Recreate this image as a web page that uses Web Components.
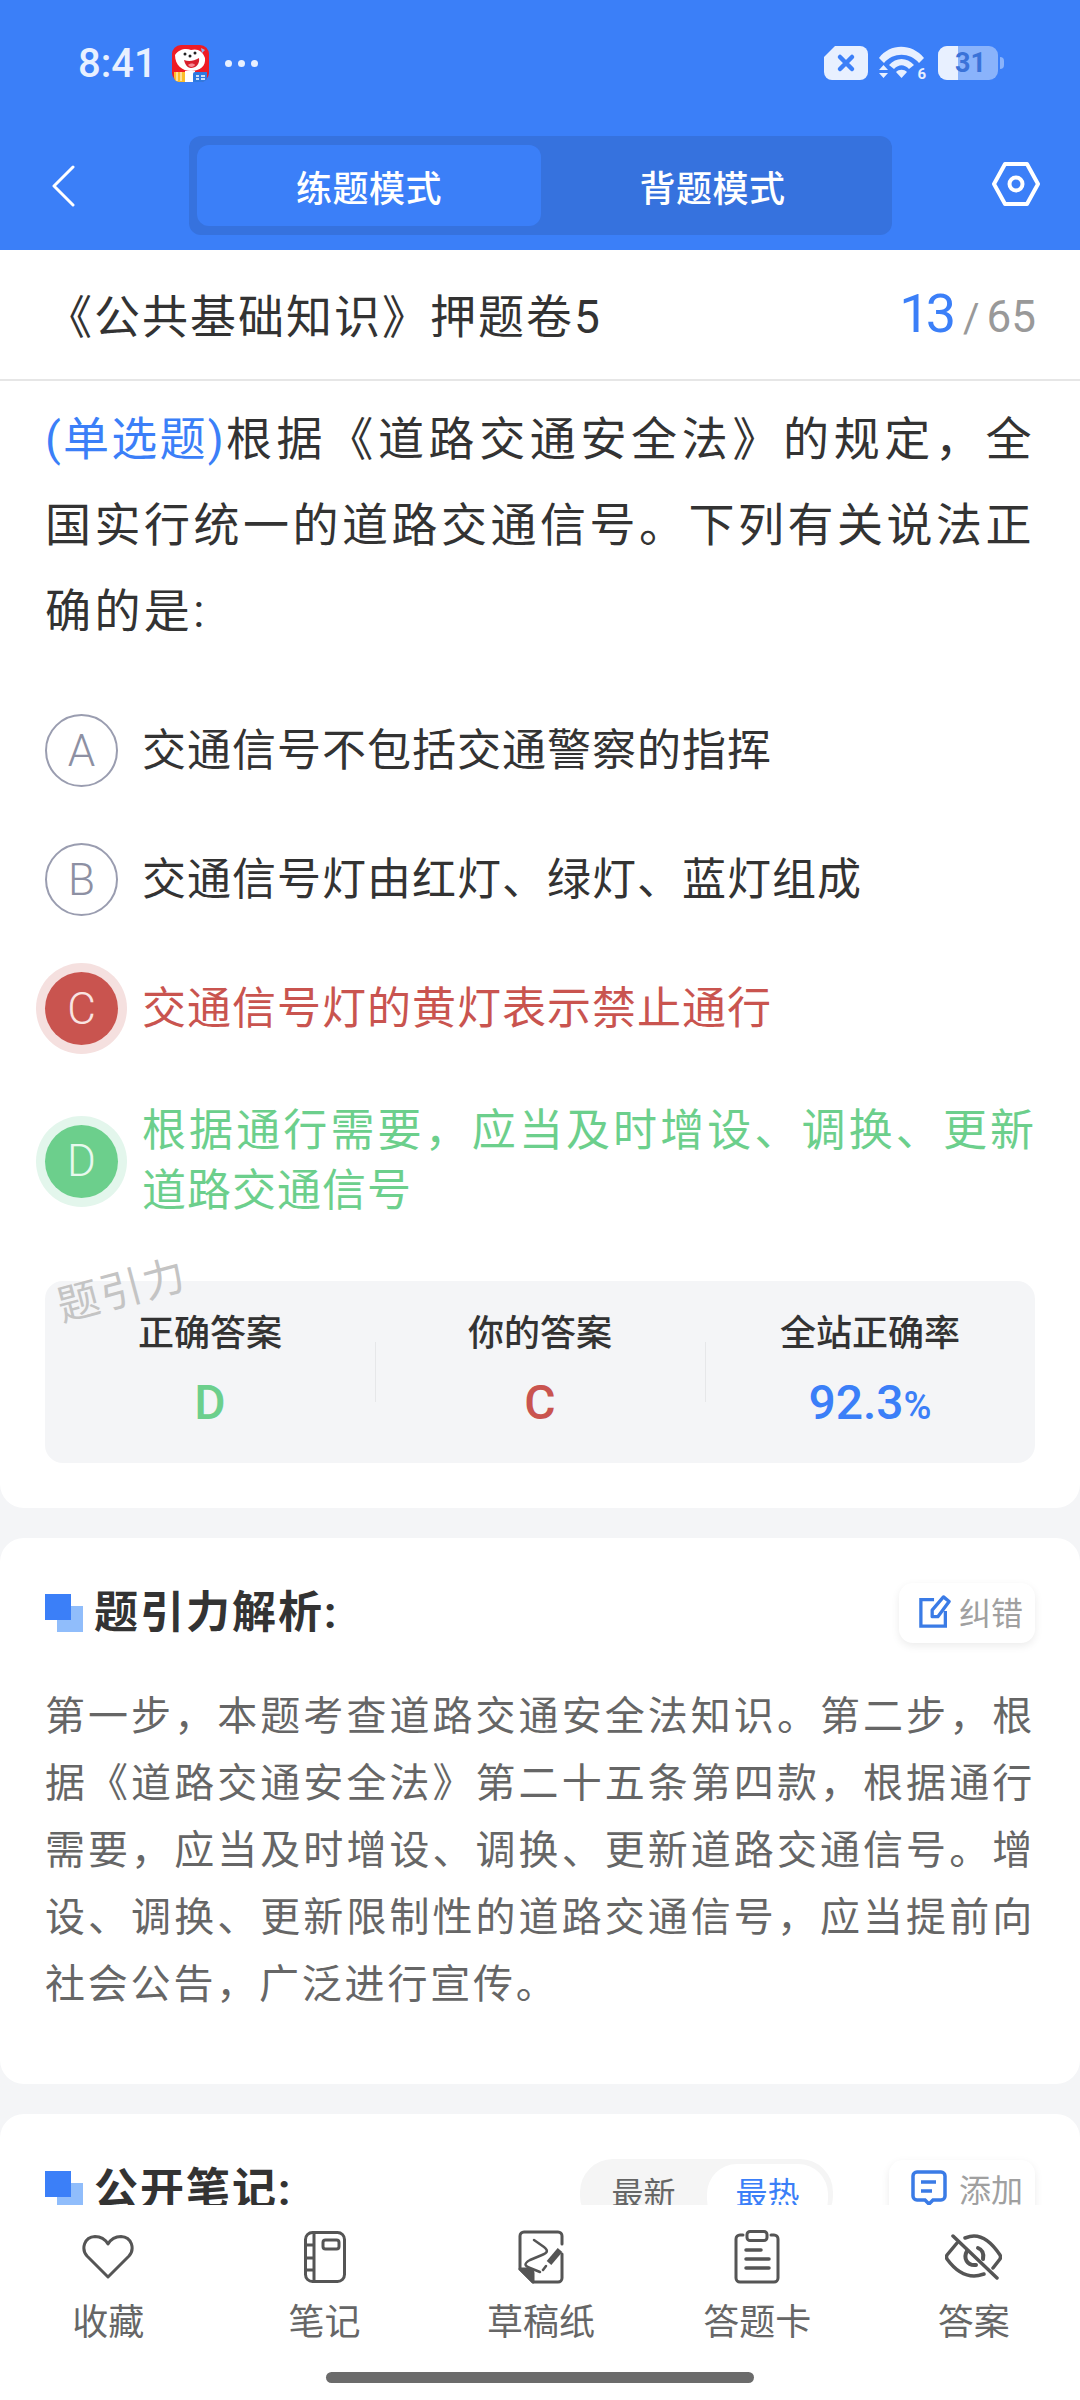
<!DOCTYPE html>
<html lang="zh">
<head>
<meta charset="utf-8">
<style>
   html, body { margin: 0; padding: 0; }
   body {
      position: relative;
      width: 1080px;
      height: 2400px;
      overflow: hidden;
      background: #f4f5f7;
      font-family: Roboto, "Noto Sans CJK SC", sans-serif;
      color: #333;
   }
</style>
</head>
<body>

<template id="app-header">
   <style>
      :host { display: block; height: 250px; background: #3b7ff8; color: #fff; }
      .status { height: 126px; display: flex; align-items: center; padding: 0 76px 0 78px; }
      .time { font-size: 40px; font-weight: 500; color: #e8f0ff; width: 94px; }
      .dots { display: flex; gap: 6px; margin-left: 16px; }
      .dots i { width: 7px; height: 7px; border-radius: 50%; background: #e8f0ff; }
      .right { margin-left: auto; display: flex; align-items: center; gap: 10px; }
      .wifi { position: relative; width: 48px; height: 36px; margin-right: 2px; }
      .wifi svg { display: block; }
      .wifi span { position: absolute; right: 0; bottom: 0; font-size: 15px; line-height: 14px; font-weight: 700; color: #e8f0ff; }
      .bat { position: relative; width: 66px; height: 34px; }
      .bat svg { display: block; }
      .bat span { position: absolute; left: 17px; top: 0; font-size: 27px; line-height: 34px; font-weight: 700; color: #3a72d8; }
      .nav { height: 124px; display: flex; align-items: flex-start; padding: 10px 40px 0 51px; }
      .back { margin-top: 29px; }
      .tabs {
         width: 703px; height: 99px; box-sizing: border-box; margin-left: 114px;
         padding: 9px 8px; background: #3672de; border-radius: 12px;
         display: flex; font-size: 36px; font-weight: 500;
      }
      .tabs div { flex: 1; display: flex; align-items: center; justify-content: center; letter-spacing: 0.5px; }
      .tabs .on { flex: none; width: 344px; background: #3b7ff8; border-radius: 12px; }
      .hex { margin: 26px 0 0 auto; }
   </style>
   <div class="status">
      <span class="time">8:41</span>
      <svg width="37" height="37" viewBox="0 0 37 37">
         <rect width="37" height="37" rx="9" fill="#ee1c25"/>
         <path d="M3 10C7 4 14 3 19 5C25 3 31 6 33 13C34 21 28 26 19 26C10 26 3 20 3 10Z" fill="#fff"/>
         <path d="M12 15C17 17 22 16 27 13C28 19 24 23 19 23C15 23 13 19 12 15Z" fill="#d81e2c"/>
         <path d="M16 20C18 18 22 18 23 20C22 22 18 23 16 20Z" fill="#f78a94"/>
         <circle cx="13" cy="9" r="1.500" fill="#222"/><circle cx="23" cy="8" r="1.500" fill="#222"/><circle cx="18" cy="11" r="1.500" fill="#222"/>
         <path d="M29 3L33 5L30 8Z" fill="#8fb8f0"/>
         <path d="M2 27H13V37H7a5 5 0 0 1-5-5Z" fill="#fbbd2b"/>
         <path d="M5 27V36M9 27V36" stroke="#fff" stroke-width="1"/>
         <rect x="13" y="26" width="10" height="11" fill="#fff"/>
         <path d="M21 29a2 2 0 0 1 2-2H35V32a5 5 0 0 1-5 5H21Z" fill="#2f79e0"/>
         <path d="M24 31H27M24 34H27M29 31H33M29 34H33" stroke="#fff" stroke-width="1.500"/>
      </svg>
      <span class="dots"><i></i><i></i><i></i></span>
      <div class="right">
         <svg width="44" height="34" viewBox="0 0 44 34">
            <path d="M11 0H36a8 8 0 0 1 8 8V26a8 8 0 0 1-8 8H8a8 8 0 0 1-8-8V11Z" fill="#e8f0ff"/>
            <path d="M16 11L28 23M28 11L16 23" stroke="#3b7ff8" stroke-width="4.500" stroke-linecap="round"/>
         </svg>
         <div class="wifi">
            <svg width="48" height="36" viewBox="0 0 48 36">
               <path d="M1 13C12 -2 34 -2 46 13L41 18C32 7 15 7 6 18Z" fill="#e8f0ff"/>
               <path d="M11 20C18 12 29 12 36 20L31 24C26 19 21 19 16 24Z" fill="#e8f0ff"/>
               <path d="M18 27C21 24 26 24 29 27L23.500 33Z" fill="#e8f0ff"/>
               <path d="M1 25L5.500 20L10 25ZM1 28L5.500 33L10 28Z" fill="#e8f0ff"/>
            </svg>
            <span>6</span>
         </div>
         <div class="bat">
            <svg width="66" height="34" viewBox="0 0 66 34">
               <rect width="60" height="34" rx="9" fill="#8ab3fb"/>
               <path d="M9 0H20V34H9a9 9 0 0 1-9-9V9a9 9 0 0 1 9-9Z" fill="#e8f0ff"/>
               <path d="M62 11a4 4 0 0 1 4 4v4a4 4 0 0 1-4 4Z" fill="#8ab3fb"/>
            </svg>
            <span>31</span>
         </div>
      </div>
   </div>
   <div class="nav">
      <svg class="back" width="24" height="42" viewBox="0 0 24 42" fill="none" stroke="#fff" stroke-width="3" stroke-linecap="round" stroke-linejoin="round"><path d="M22 2L3 21L22 40"/></svg>
      <div class="tabs"><div class="on">练题模式</div><div>背题模式</div></div>
      <svg class="hex" width="48" height="44" viewBox="0 0 48 44" fill="none" stroke="#fff" stroke-width="4" stroke-linejoin="round">
         <path d="M13 2H35L46 22L35 42H13L2 22Z"/><circle cx="24" cy="22" r="6.500"/>
      </svg>
   </div>
</template>

<template id="paper-title">
   <style>
      :host { display: flex; align-items: center; justify-content: space-between; height: 131px; box-sizing: border-box; padding: 0 44px 3px 46px; background: #fff; border-bottom: 2px solid #e6e6e6; }
      .name { font-size: 46px; color: #333; letter-spacing: 2px; }
      .count { display: flex; align-items: baseline; color: #999; font-size: 44px; }
      .count b { font-weight: 400; font-size: 54px; letter-spacing: -4px; color: #3b7ff8; }
      .count i { font-style: normal; font-size: 40px; margin: 0 7px 0 11px; }
   </style>
   <span class="name"><slot></slot></span>
   <span class="count"><b><slot name="current"></slot></b><i>/</i><slot name="total"></slot></span>
</template>

<template id="white-card">
   <style>
      :host { display: block; position: relative; background: #fff; border-radius: 24px; padding: 0 45px; }
   </style>
   <slot></slot>
</template>

<template id="answer-option">
   <style>
      :host { display: flex; align-items: center; gap: 24px; margin-top: var(--gap, 57px); font-size: 44px; letter-spacing: 1px; line-height: 60px; color: var(--tone, #333); }
      .dot {
         flex: none; width: 73px; height: 73px; box-sizing: border-box; border-radius: 50%;
         display: flex; align-items: center; justify-content: center;
         font-size: 44px; font-weight: 300; letter-spacing: 0; border: 2px solid #9a9db0; color: #8d90a3;
      }
      :host([state]) .dot { border: 0; background: var(--tone); color: var(--ink); box-shadow: 0 0 0 9px var(--halo); }
      :host([state="wrong"]) { --tone: #c9544f; --halo: #f5e0df; --ink: #f9e4e2; }
      :host([state="right"]) { --tone: #6ccf8c; --halo: #e3f6ec; --ink: #e8f9ee; }
      .text { flex: 1; text-align: justify; }
   </style>
   <span class="dot"><slot name="key"></slot></span>
   <span class="text"><slot></slot></span>
</template>

<template id="answer-stats">
   <style>
      :host { display: grid; grid-template-columns: 1fr 1fr 1fr; height: 182px; background: #f4f5f7; border-radius: 18px; margin-top: 60px; }
      div { position: relative; display: flex; flex-direction: column; align-items: center; }
      div + div::before { content: ""; position: absolute; left: 0; top: 61px; height: 60px; width: 1px; background: #e6e7e9; }
      b { font-size: 36px; font-weight: 500; line-height: 46px; margin-top: 30px; color: #333; }
      span { font-size: 48px; font-weight: 500; line-height: 52px; margin-top: 20px; }
      small { font-size: 38px; }
   </style>
   <div><b>正确答案</b><span style="color:#6ccf8c">D</span></div>
   <div><b>你的答案</b><span style="color:#c9544f">C</span></div>
   <div><b>全站正确率</b><span style="color:#3b7ff8">92.3<small>%</small></span></div>
</template>

<template id="section-head">
   <style>
      :host { display: flex; align-items: flex-start; height: 60px; }
      .mark { position: relative; flex: none; width: 38px; height: 38px; margin: 11px 11px 0 0; }
      .mark::before { content: ""; position: absolute; right: 0; bottom: 0; width: 26px; height: 26px; background: #90bdfb; }
      .mark::after { content: ""; position: absolute; left: 0; top: 0; width: 26px; height: 26px; background: #3b7ff8; }
      .t { font-size: 44px; line-height: 60px; font-weight: 700; color: #333; letter-spacing: 2px; }
      .end { margin-left: auto; display: flex; align-items: flex-start; }
   </style>
   <span class="mark"></span>
   <span class="t"><slot></slot></span>
   <span class="end"><slot name="end"></slot></span>
</template>

<template id="ghost-button">
   <style>
      :host { display: flex; align-items: center; gap: 8px; height: 60px; box-sizing: border-box; padding: 0 12px 4px 20px; border-radius: 14px; background: #fff; box-shadow: 0 3px 8px rgba(0,0,0,.08); font-size: 32px; color: #a0a0a0; }
   </style>
   <slot name="icon"></slot><slot></slot>
</template>

<template id="sort-toggle">
   <style>
      :host { display: flex; width: 253px; height: 70px; box-sizing: border-box; padding: 5px 5px 0 0; background: #f5f5f5; border-radius: 33px; font-size: 32px; margin-top: -1px; }
      span { flex: 1; display: flex; align-items: center; justify-content: center; color: #666; border-radius: 30px; padding-bottom: 12px; }
      .on { flex: none; width: 121px; background: #fff; color: #3b7ff8; }
   </style>
   <span>最新</span><span class="on">最热</span>
</template>

<template id="tool-bar">
   <style>
      :host { position: absolute; left: 0; right: 0; top: 2205px; height: 195px; background: #fff; display: block; }
      .items { display: grid; grid-template-columns: repeat(5, 216.4px); }
      .bar { position: absolute; left: 326px; top: 167px; width: 428px; height: 11px; border-radius: 6px; background: #6b6b6b; }
   </style>
   <div class="items"><slot></slot></div>
   <div class="bar"></div>
</template>

<template id="tool-item">
   <style>
      :host { display: flex; flex-direction: column; align-items: center; font-size: 36px; color: #666; }
      .i { height: 60px; margin-top: 22px; display: flex; align-items: center; }
      span { margin-top: 12px; line-height: 48px; }
   </style>
   <div class="i"><slot name="icon"></slot></div>
   <span><slot></slot></span>
</template>

<app-header></app-header>

<white-card style="border-radius:0 0 24px 24px;height:1258px;box-sizing:border-box">
   <paper-title style="margin:0 -45px">《公共基础知识》押题卷5<span slot="current">13</span><span slot="total">65</span></paper-title>
   <div style="font-size:46px;line-height:86px;letter-spacing:3.400px;text-align:justify;color:#333;margin-top:15px">
      <div style="text-align-last:justify"><span style="color:#3b7ff8;letter-spacing:1px">(单选题)</span>根据《道路交通安全法》的规定，全</div>
      <div>国实行统一的道路交通信号。下列有关说法正确的是:</div>
   </div>
   <answer-option style="--gap:60px"><span slot="key">A</span>交通信号不包括交通警察的指挥</answer-option>
   <answer-option style="--gap:56px"><span slot="key">B</span>交通信号灯由红灯、绿灯、蓝灯组成</answer-option>
   <answer-option state="wrong" style="--gap:56px"><span slot="key">C</span>交通信号灯的黄灯表示禁止通行</answer-option>
   <answer-option state="right" style="--gap:56px"><span slot="key">D</span>根据通行需要，应当及时增设、调换、更新道路交通信号</answer-option>
   <answer-stats></answer-stats>
   <div style="position:absolute;left:55px;top:1006px;font-size:42px;color:#c4c4c4;transform:rotate(-15deg);letter-spacing:2px">题引力</div>
</white-card>

<white-card style="margin-top:30px;height:546px;box-sizing:border-box;padding-top:45px">
   <section-head>题引力解析:
      <ghost-button slot="end">
         <svg slot="icon" width="32" height="34" viewBox="0 0 34 36" fill="none" stroke="#3a7be6" stroke-width="3.500"><path d="M16 6H2V34H28V18"/><path d="M14 24V17L26 3L32 8L20 24Z" stroke-linejoin="round"/></svg>
         纠错
      </ghost-button>
   </section-head>
   <div style="margin-top:40px;font-size:40px;line-height:67px;letter-spacing:2.800px;text-align:justify;color:#666">第一步，本题考查道路交通安全法知识。第二步，根据《道路交通安全法》第二十五条第四款，根据通行需要，应当及时增设、调换、更新道路交通信号。增设、调换、更新限制性的道路交通信号，应当提前向社会公告，广泛进行宣传。</div>
</white-card>

<white-card style="margin-top:30px;height:400px;box-sizing:border-box;padding-top:46px">
   <section-head>公开笔记:
      <sort-toggle slot="end" style="margin-right:56px"></sort-toggle>
      <ghost-button slot="end" style="gap:12px;padding-left:22px">
         <svg slot="icon" width="36" height="36" viewBox="0 0 36 36" fill="none" stroke="#3a7be6" stroke-width="3.500"><path d="M6 2H30a4 4 0 0 1 4 4V26a4 4 0 0 1-4 4H22L18 34L14 30H6a4 4 0 0 1-4-4V6a4 4 0 0 1 4-4Z"/><path d="M10 12H25M10 21H21"/></svg>
         添加
      </ghost-button>
   </section-head>
</white-card>

<tool-bar>
   <tool-item>
      <svg slot="icon" width="52" height="46" viewBox="0 0 52 46" fill="none" stroke="#555" stroke-width="3" stroke-linejoin="round"><path d="M26 43L5 22C-1 15 2 3 13 2.500C19 2.500 23 5 26 10C29 5 33 2.500 39 2.500C50 3 53 15 47 22Z"/></svg>
      收藏
   </tool-item>
   <tool-item>
      <svg slot="icon" width="42" height="52" viewBox="0 0 42 52" fill="none" stroke="#555" stroke-width="3" stroke-linejoin="round"><rect x="1.500" y="1.500" width="39" height="49" rx="7"/><path d="M10 2V50M2 14H10M2 27H10M2 39H10"/><rect x="19" y="9" width="16" height="9" rx="2.500"/></svg>
      笔记
   </tool-item>
   <tool-item>
      <svg slot="icon" width="46" height="54" viewBox="0 0 46 54" fill="none" stroke="#555" stroke-width="3" stroke-linejoin="round" stroke-linecap="round">
         <path d="M2 39V6a4 4 0 0 1 4-4H40a4 4 0 0 1 4 4V14M44 24V48a4 4 0 0 1-4 4H15L2 39"/>
         <path d="M2 39L15 52V43a4 4 0 0 0-4-4Z" fill="#555"/>
         <path d="M16 10L26 17C31 21 29 23 24 25L12 30C5 34 7 36 12 38L22 42" stroke-width="2.500"/>
         <path d="M31 33L42 20" stroke-width="6" stroke-linecap="butt"/>
         <path d="M25 40L28 36" stroke-width="2.500"/>
      </svg>
      草稿纸
   </tool-item>
   <tool-item>
      <svg slot="icon" width="46" height="54" viewBox="0 0 46 54" fill="none" stroke="#555" stroke-width="3" stroke-linejoin="round" stroke-linecap="round">
         <path d="M9 5H6a4 4 0 0 0-4 4V48a4 4 0 0 0 4 4H40a4 4 0 0 0 4-4V9a4 4 0 0 0-4-4H37"/>
         <rect x="13" y="1.500" width="20" height="9" rx="3"/>
         <path d="M12 20H27M12 29H35M12 38H35" stroke-width="3.500"/>
      </svg>
      答题卡
   </tool-item>
   <tool-item>
      <svg slot="icon" width="57" height="46" viewBox="0 0 57 46" fill="none" stroke="#555" stroke-width="3.500" stroke-linecap="round" stroke-linejoin="round">
         <path d="M12 9L2 21Q1 23 2 25C10 36 18 42 29 42C33 42 36 41 39 40"/>
         <path d="M20 4C24 2.500 27 2 29 2C39 2 47 9 55 21Q56 23 55 25L48 34"/>
         <path d="M22 17C18 24 22 32 31 31" stroke-width="4"/>
         <path d="M33 14C38 16 39 20 38 25" stroke-width="4"/>
         <path d="M8 2L52 44"/>
      </svg>
      答案
   </tool-item>
</tool-bar>

<script>
   // one small class per tag, all of them just stamp their template
   for (const tag of ['app-header', 'paper-title', 'white-card', 'answer-option', 'answer-stats',
                      'section-head', 'ghost-button', 'sort-toggle', 'tool-bar', 'tool-item']) {
      customElements.define(tag, class extends HTMLElement {
         constructor() {
            super()
            let shadow = this.attachShadow({ mode: 'open' })
            shadow.appendChild(document.querySelector('#' + tag).content.cloneNode(true))
         }
      })
   }
</script>
</body>
</html>
